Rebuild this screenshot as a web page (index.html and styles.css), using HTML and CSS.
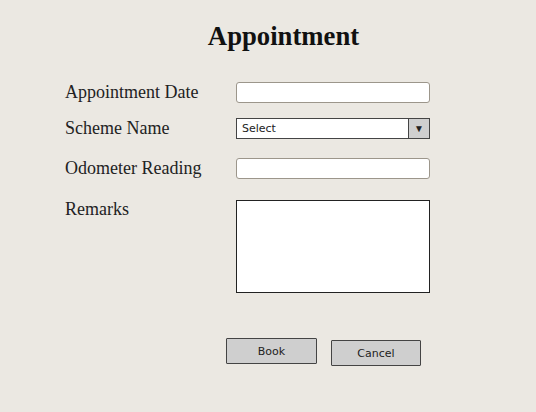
FILE: index.html
```html
<!DOCTYPE html>
<html>
<head>
<meta charset="utf-8">
<link rel="stylesheet" href="styles.css">
</head>
<body>
<div class="page">
  <h1 class="title">Appointment</h1>
  <div class="form">
    <label class="label">Appointment Date</label>
    <div class="field"><div class="input"></div></div>
    <label class="label">Scheme Name</label>
    <div class="field">
      <div class="select">
        <span class="select-text">Select</span>
        <span class="select-btn">&#9660;</span>
      </div>
    </div>
    <label class="label row3">Odometer Reading</label>
    <div class="field row3"><div class="input"></div></div>
    <label class="label row4">Remarks</label>
    <div class="field row4"><div class="textarea"></div></div>
  </div>
  <div class="actions">
    <button class="btn btn-book">Book</button>
    <button class="btn btn-cancel">Cancel</button>
  </div>
</div>
</body>
</html>
```
FILE: styles.css
```css
html, body {
  margin: 0;
  padding: 0;
  background: #ebe8e2;
}
.page {
  width: 536px;
  height: 412px;
  box-sizing: border-box;
  padding-top: 20px;
  font-family: "Liberation Serif", "Times New Roman", serif;
  color: #1a1a1a;
}
.title {
  margin: 0;
  font-size: 26.7px;
  font-weight: bold;
  text-align: center;
  padding-left: 31px;
  line-height: 32px;
  color: #111;
}
.form {
  margin-top: 30px;
  padding-left: 65px;
  display: grid;
  grid-template-columns: 171px 194px;
  row-gap: 15px;
}
.label {
  font-size: 18px;
  line-height: 21px;
  color: #222;
}
.row3 {
  margin-top: 4px;
}
.row4 {
  margin-top: 6px;
}
.label.row4 {
  margin-top: 5px;
}
.field {
  display: flex;
}
.input {
  width: 194px;
  height: 21px;
  box-sizing: border-box;
  background: #fff;
  border: 1px solid #9c968b;
  border-radius: 3px;
}
.select {
  width: 194px;
  height: 21px;
  box-sizing: border-box;
  background: #fff;
  border: 1px solid #444;
  display: flex;
  align-items: stretch;
}
.select-text {
  flex: 1;
  font-family: "DejaVu Sans", sans-serif;
  font-size: 11px;
  line-height: 20px;
  padding-left: 5px;
  color: #222;
}
.select-btn {
  width: 20px;
  background: #cfcfcf;
  border-left: 1px solid #444;
  font-size: 10px;
  line-height: 19px;
  text-align: center;
  color: #222;
}
.textarea {
  width: 194px;
  height: 93px;
  box-sizing: border-box;
  background: #fff;
  border: 1.5px solid #222;
}
.actions {
  margin-top: 45px;
  padding-left: 226px;
  display: flex;
  gap: 14px;
  align-items: flex-start;
}
.btn {
  font-family: "DejaVu Sans", sans-serif;
  font-size: 11px;
  color: #222;
  background: #cfcfcf;
  border: 1.5px solid #444;
  border-radius: 1px;
  height: 26px;
  padding: 0;
  margin: 0;
}
.btn-book {
  width: 91px;
}
.btn-cancel {
  width: 90px;
  margin-top: 2px;
}
```
